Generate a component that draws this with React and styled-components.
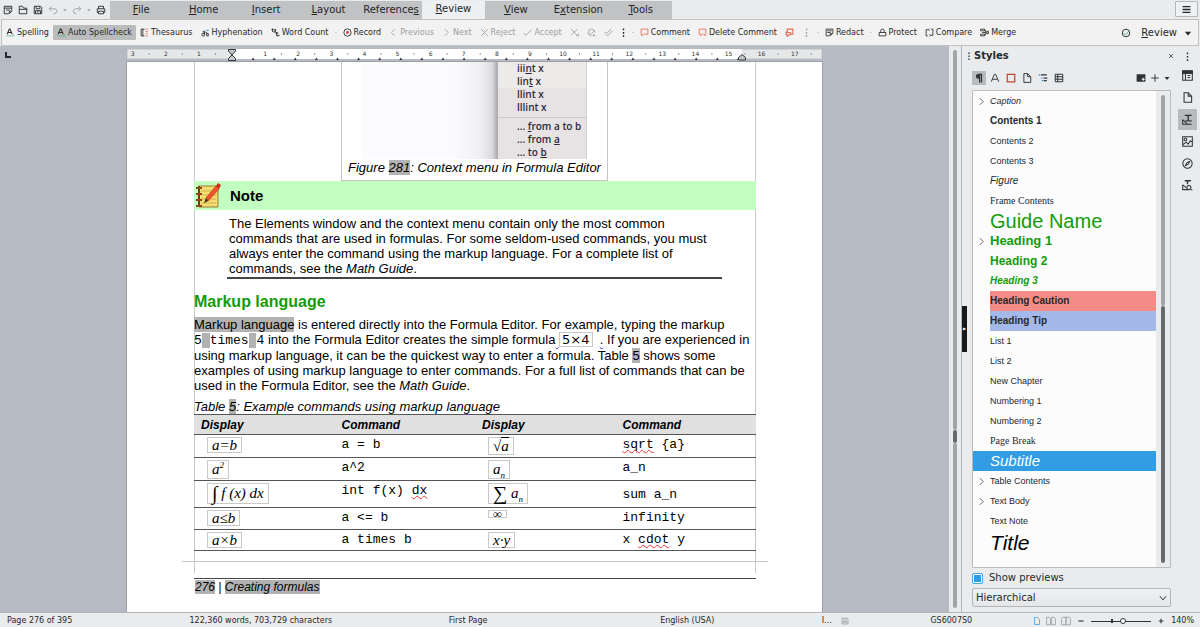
import React, { useState } from 'react';
import styled, { createGlobalStyle, css } from 'styled-components';

const ui = '"DejaVu Sans", sans-serif';
const sans = '"Liberation Sans", Arial, sans-serif';
const serif = '"Liberation Serif", "Times New Roman", serif';
const mono = '"Liberation Mono", "Courier New", monospace';

const GlobalStyle = createGlobalStyle`
  * {
    box-sizing: border-box;
  }
  body {
    margin: 0;
    background: #eaebed;
    color: #26282a;
    font: 8px/12px ${ui};
  }
  button, select, input {
    margin: 0;
    padding: 0;
    border: 0;
    background: none;
    color: inherit;
    font: inherit;
  }
`;

const Window = styled.div`
  display: flex;
  flex-direction: column;
  height: 100vh;
  overflow: hidden;
`;

/* ---------- top bar ---------- */

const TopBar = styled.header`
  display: flex;
  flex: none;
  height: 19px;
  justify-content: space-between;
`;

const QuickAccess = styled.div`
  display: flex;
  align-items: center;
  width: 110px;
  padding-left: 3px;
  gap: 5px;
`;

const IconButton = styled.button`
  display: flex;
  flex: none;
  align-items: center;
  justify-content: center;
  width: ${p => p.$w || 10}px;
  height: ${p => p.$h || 14}px;
  border-radius: 1px;
  color: ${p => p.$color || '#303336'};
  background: ${p => (p.$active ? '#b9babb' : 'none')};
`;

const DropArrow = styled(IconButton)`
  margin: 0 -1px;
`;

const MenuTabs = styled.nav`
  display: grid;
  flex: 0 1 562px;
  grid-template-columns: repeat(9, minmax(0, 1fr));
  margin: 1px auto 0 0;
  background: #c1c2c3;
`;

const MenuTab = styled.a`
  padding: ${p => (p.$active ? '2px 0 0' : '3px 0 0')};
  background: ${p => (p.$active ? '#eeeff0' : 'none')};
  color: #232527;
  font-size: 10px;
  text-align: center;
  text-decoration: none;
`;

const HamburgerButton = styled.button`
  display: flex;
  align-items: center;
  justify-content: center;
  width: 23px;
  height: 16px;
  margin: 1px 2px 0 0;
  border: 1px solid #b4b6b8;
  border-radius: 1px;
  background: #f0f1f2;
`;

/* ---------- review toolbar ---------- */

const Toolbar = styled.div`
  display: flex;
  flex: none;
  align-items: center;
  height: 27px;
  margin: 0 1px;
  border: 1px solid #c0c2c4;
  background: #f2f2f2;
`;

const ToolButton = styled.button`
  display: flex;
  flex: none;
  align-items: center;
  gap: 2px;
  height: 15px;
  padding: 0 ${p => (p.$narrow ? 2 : 4)}px;
  border-radius: 1px;
  color: ${p => (p.disabled ? '#9c9ea0' : '#26282a')};
  background: ${p => (p.$active ? '#bbbdbc' : 'none')};
  white-space: nowrap;
`;

const Sep = styled.span`
  flex: none;
  width: 2px;
  height: 1px;
  margin: 0 2px;
  background: #cfd0d1;
`;

const Spacer = styled.span`
  flex: 1;
`;

const ToolbarMenu = styled.button`
  display: flex;
  align-items: center;
  gap: 6px;
  margin: 0 5px 0 10px;
  font-size: 10px;
`;

/* ---------- workspace ---------- */

const Workspace = styled.main`
  display: flex;
  flex: 1;
  min-height: 0;
`;

const Editor = styled.section`
  display: flex;
  flex: 1;
  flex-direction: column;
  min-width: 0;
  overflow: hidden;
  background: #b6bac2;
`;

const RulerRow = styled.div`
  display: flex;
  flex: none;
  align-items: flex-start;
  justify-content: center;
  height: 16px;
  padding-top: 3px;
`;

const TabCorner = styled.span`
  flex: 1;
  height: 4px;

  &::before {
    content: '';
    display: block;
    width: 4px;
    height: 4px;
    margin: 3px 0 0 5px;
    border: solid #26282a;
    border-width: 0 0 2px 2px;
  }
`;

const Page = styled.article`
  flex: 1;
  align-self: center;
  width: 100%;
  max-width: 695px;
  padding: 0 66px 0 67px;
  background: #fff;
  box-shadow: 0 0 0 1px #9da0a6;
  color: #000;
  font: 13px/15px ${sans};
  white-space: nowrap;
`;

const TextArea = styled.div`
  box-shadow: inset 1px 0 #c9c9c9, inset -1px 0 #c9c9c9;
  padding-bottom: 11px;
`;

const Figure = styled.figure`
  width: 267px;
  height: 119px;
  margin: 0 auto 0 147px;
  padding: 0 20px;
  border: 1px solid #c4c4c4;
  border-top: 0;
`;

const FigureImage = styled.div`
  display: grid;
  grid-template-columns: 1fr 89px;
  height: 97px;
  overflow: hidden;
  background: linear-gradient(90deg, #fbfbfd 90px, #f0f0f3 118px, #dcdce0 130px, #a5a5aa 136px);
`;

const ContextMenu = styled.div`
  border-right: 1px solid #d4cfd0;
  background: linear-gradient(#edebe9 26px, #e7e2e3 26px);
  color: #2d2b3b;
  font: 600 10px/13px "Open Sans", "Noto Sans", sans-serif;

  div {
    padding-left: 19px;
  }
  hr {
    margin: 3px 0 2px;
    border: 0;
    border-top: 1px solid #cdc8c9;
  }
`;

const FigCaption = styled.figcaption`
  margin: 0 -14px;
  padding-top: 1px;
  text-align: center;
  font-style: italic;
`;

const Field = styled.span`
  background: #b2b2b2;
`;

const NoteBar = styled.div`
  display: flex;
  align-items: center;
  gap: 8px;
  height: 29px;
  background: #c2ffc0;
  font-size: 15px;
  font-weight: bold;
`;

const NoteText = styled.p`
  margin: 6px 34px 0 33px;
  padding: 0 0 1px 2px;
  border-bottom: 2px solid #444;
`;

const Heading = styled.h2`
  margin: 14px 0 6px;
  color: #149b08;
  font-size: 16px;
  line-height: 18px;
`;

const Paragraph = styled.p`
  margin: 0 0 6px;
`;

const Code = styled.code`
  font: 13px/14px ${mono};
`;

const Formula = styled.span`
  display: inline-block;
  padding: 0 4px;
  border: 1px solid #c9c9c9;
  font: italic ${p => p.$size || 15}px/${p => p.$h || 14}px ${serif};
  vertical-align: top;

  sup, sub {
    font-size: 9px;
    line-height: 0;
  }
  b {
    font-weight: normal;
    font-style: normal;
    font-size: 20px;
    line-height: 0;
    vertical-align: -2px;
  }
`;

const InlineFormula = styled(Formula)`
  padding: 0 2px;
  font: 13px/13px ${ui};
`;

const Radicand = styled.span`
  border-top: 1px solid #000;
`;

const Misspelled = styled.span`
  text-decoration: underline wavy ${p => p.$color || '#f03030'} 1px;
  text-decoration-skip-ink: none;
`;

const CommandTable = styled.table`
  width: 100%;
  border-collapse: collapse;
  table-layout: fixed;

  caption {
    font-style: italic;
    text-align: left;
  }
  th {
    height: 20px;
    padding: 0 0 0 7px;
    border: solid #555;
    border-width: 1px 0;
    background: #e0e0e0;
    font: italic bold 12px/18px ${sans};
    text-align: left;
  }
  td {
    padding: 2px 0 0 7px;
    border-bottom: 1px solid #555;
    font: 13px/15px ${mono};
    vertical-align: top;
  }
  td:nth-child(odd) {
    padding-left: 13px;
  }
`;

const Row = styled.tr`
  && td {
    height: ${p => p.$h}px;
    ${p => p.$middle && css`
      &:last-child {
        padding-top: 0;
        vertical-align: middle;
      }
    `}
  }
`;

const PageEdge = styled.div`
  height: 1px;
  margin: 10px -12px 0;
  background: #c9c9c9;
`;

const PageFooter = styled.footer`
  margin-top: 5px;
  padding: 1px;
  border-top: 1px solid #444;
  font-size: 12px;
  font-style: italic;
`;

/* ---------- scrollbars & sidebar ---------- */

const ScrollTrack = styled.div`
  display: flex;
  flex: none;
  flex-direction: column;
  width: ${p => p.$w}px;
  padding: 4px ${p => (p.$w - 4) / 2}px;
`;

const ScrollPart = styled.span`
  flex: ${p => p.$size} 0 0;
  background: ${p => (p.$thumb ? '#68696b' : '#a3a4a6')};
  border-radius: 2px;
`;

const Splitter = styled.div`
  display: flex;
  flex: none;
  align-items: center;
  width: 6px;
  border-left: 1px solid #b4b6b8;

  button {
    width: 5px;
    height: 46px;
    background: #17181a;
    color: #fff;
    font-size: 4px;
    line-height: 46px;
  }
`;

const Sidebar = styled.aside`
  display: flex;
  flex: none;
  flex-direction: column;
  width: 208px;
  padding: 0 4px 5px 5px;
`;

const SidebarTitle = styled.div`
  display: flex;
  align-items: center;
  gap: 1px;
  height: 20px;
  margin: 0 -5px 0 -7px;

  h1 {
    flex: 1;
    margin: 0;
    font-size: 10px;
  }
`;

const SidebarTools = styled.div`
  display: flex;
  align-items: center;
  gap: 2px;
  height: 24px;
`;

const TreeBox = styled.div`
  display: flex;
  flex: 1;
  min-height: 0;
  border: 1px solid #b9bbbd;
  border-radius: 1px;
`;

const Tree = styled.ul`
  flex: 1;
  margin: 0;
  padding: 0;
  overflow: hidden;
  background: #fcfcfc;
  list-style: none;
`;

const TreeItem = styled.li`
  display: flex;
  align-items: center;
  height: ${p => p.$h || 20}px;
  background: ${p => (p.$selected ? '#339de3' : 'none')};
  color: ${p => (p.$selected ? '#fff' : p.$color || '#26282a')};
`;

const Twisty = styled.span`
  display: flex;
  justify-content: center;
  width: 17px;
  color: #4a4c4f;
`;

const StyleName = styled.span`
  flex: 1;
  background: ${p => p.$bg || 'none'};
  font: ${p => p.$font};
  white-space: nowrap;
`;

const CheckLabel = styled.label`
  display: flex;
  align-items: center;
  gap: 6px;
  height: 20px;
  font-size: 10px;

  input {
    appearance: none;
    width: 11px;
    height: 11px;
    border: 1px solid #4ba6e2;
    border-radius: 2px;
    background: #fff;
  }
  input:checked {
    background: #339de3;
    box-shadow: inset 0 0 0 1px #fff;
  }
`;

const SelectBox = styled.div`
  display: grid;
  align-items: center;
  height: 19px;
  border: 1px solid #b4b6b8;
  border-radius: 2px;
  background: linear-gradient(#f0f1f2, #e5e6e8);

  select, svg {
    grid-area: 1 / 1;
  }
  select {
    appearance: none;
    width: 100%;
    padding-left: 3px;
    font-size: 10px;
  }
  svg {
    justify-self: end;
    margin-right: 2px;
    pointer-events: none;
  }
`;

const DeckTabs = styled.nav`
  display: flex;
  flex: none;
  flex-direction: column;
  align-items: center;
  width: 25px;
  padding-top: 3px;
  gap: 1px;
`;

/* ---------- status bar ---------- */

const StatusBar = styled.footer`
  display: grid;
  flex: none;
  grid-template-columns: 183fr 260fr 212fr 162fr 109fr 103fr auto;
  align-items: center;
  height: 15px;
  padding: 1px 6px 0 7px;
  border-top: 1px solid #b4b6b8;
  white-space: nowrap;
`;

const StatusGroup = styled.div`
  display: flex;
  align-items: center;
  gap: ${p => p.$gap}px;
`;

const ZoomSlider = styled.input`
  appearance: none;
  width: 60px;
  height: 7px;
  background: linear-gradient(#303336, #303336) center / 100% 1px no-repeat,
    linear-gradient(#303336, #303336) 20px center / 2px 4px no-repeat;

  &::-webkit-slider-thumb {
    appearance: none;
    width: 6px;
    height: 6px;
    border: 1px solid #303336;
    border-radius: 50%;
    background: #fff;
  }
`;

/* ---------- icons ---------- */

const Icon = ({ size = 10, w = 1.5, color = 'currentColor', children }) => (
  <svg
    width={size}
    height={size}
    viewBox="0 0 16 16"
    fill="none"
    stroke={color}
    strokeWidth={w}
    aria-hidden="true"
  >
    {children}
  </svg>
);

const icons = {
  newDoc: <path d="M9 14H2V2h12v7M2 5h12M14 10l-4 4v-4zM5 8h6" />,
  open: <path d="M2 14V2h5l2 3h5v9zM2 7h12" />,
  save: <path d="M2 2h10l2 2v10H2zM5 2v4h6V2M4 14V9h8v5M6 11h4" />,
  undo: <path d="M6 2 2 6l4 4M2 6h8q4 0 4 4t-5 4" />,
  redo: <path d="M10 2l4 4-4 4M14 6H6q-4 0-4 4t5 4" />,
  print: <path d="M4 6V2h8v4M4 12H2V6h12v6h-2M4 10h8v4H4z" />,
  spelling: (
    <>
      <path d="M2 11 6 2h1l4 9M4 8h6" strokeWidth="1.8" />
      <path d="M1 14h14M13 11v1" stroke="#2fa866" strokeDasharray="2 1" />
    </>
  ),
  thesaurus: (
    <>
      <path d="M8 2H2v12h6M5 2v12" />
      <path d="M10 2h4M10 6h4M10 10h4M10 14h4" stroke="#e0715a" />
    </>
  ),
  hyphenation: (
    <>
      <circle cx="4" cy="12" r="2.5" />
      <path d="M6 12V7M3 6h4v3H3M10 7v7M10 10h3v4h-3" />
      <path d="M9 4h5" stroke="#3a8edb" />
    </>
  ),
  wordCount: <path d="M1 3l2-1v5M5 3h3v2L6 7h2M8 9h5M10 7v6q0 1 3 1M14 12v2" strokeWidth="1.8" />,
  record: (
    <>
      <circle cx="8" cy="8" r="6.5" />
      <circle cx="8" cy="8" r="2.5" fill="#d93a3a" stroke="none" />
    </>
  ),
  prev: <path d="M10 2 4 8l6 6" />,
  next: <path d="m5 2 6 6-6 6" />,
  reject: <path d="m2 2 12 12M14 2 2 14" />,
  accept: <path d="m1 9 4 4L15 3" />,
  rejectNext: <path d="m2 2 11 11M13 2 2 13M11 14h4v-4" />,
  acceptTrack: <path d="M14 8a6 6 0 1 0-6 6M4 8l3 3 6-6M12 11v4M10 13h5" />,
  acceptAll: <path d="m1 7 3 3 9-8M3 11l3 3 9-9" />,
  comment: <path d="M2 2h12v9H6l-3 3v-3H2z" stroke="#ea6a52" />,
  deleteComment: <path d="M2 11V2h12v8M2 11h2v3l3-3h2M10 10l4 4M14 10l-4 4" stroke="#ea6a52" />,
  comments: <path d="M4 9V2h10v9H9M2 6v6h2v3l3-3h3V8H2z" stroke="#ea6a52" strokeWidth="2" />,
  redact: <path d="M8 14H2V2h12v7M4 5h8M4 8h6M14 9l-5 5v-4h5" />,
  protect: <path d="M2 8h12v6H2zM5 8V4q0-2 3-2t3 2v4" />,
  compare: <path d="M6 3H2v11h3M10 13h4V2h-3M8 1 6 3l2 2M8 11l2 2-2 2" />,
  merge: <path d="M1 2h7v3H1zM1 11h7v3H1zM8 4h2v4H4M8 12h2V8M12 6h3v4h-3z" />,
  check: (
    <>
      <circle cx="8" cy="8" r="6" />
      <path d="m4 8 3 3 6-6" stroke="#3daf77" />
    </>
  ),
  down: <path d="M3 6h10l-5 6z" fill="currentColor" stroke="none" />,
  dots: <path d="M8 1v3M8 7v3M8 13v3" strokeWidth="2.5" />,
  hamburger: <path d="M1 3h14M1 8h14M1 13h14" strokeWidth="2.4" />,
  para: <path d="M8 1h5v14h-2V3h-1v12H8V9Q3 9 3 5t5-4z" fill="currentColor" stroke="none" />,
  frame: <path d="M2 2h12v12H2z" stroke="#c0492d" strokeWidth="2" />,
  page: <path d="M3 1h6l5 5v9H3zM9 1v5h5" />,
  list: (
    <>
      <path d="M5 3h9M9 8h6M9 12h5" strokeWidth="2" />
      <path d="M1 3h3M5 8h2M6 12h2" stroke="#3a8edb" strokeWidth="2" />
    </>
  ),
  table: <path d="M2 2h12v12H2zM2 6h12M2 10h12M6 2v12" strokeWidth="1.6" />,
  fill: (
    <>
      <path d="M1 2h14v12H1z" fill="currentColor" stroke="none" />
      <path d="M9 10h5M11.500 7.500v5" stroke="#fff" />
    </>
  ),
  plus: <path d="M8 2v12M2 8h12" />,
  close: <path d="m4 4 8 8M12 4l-8 8" />,
  properties: (
    <>
      <path d="M1 2h14v13H1zM5 5v10M8 8h4M8 11h4" />
      <path d="M1 1h14v4H1z" fill="currentColor" />
    </>
  ),
  styles: (
    <>
      <path d="M4 2h10M9 2v7" strokeWidth="2" />
      <path d="M1 8v7h13M1 8l7 7M5 10h9" />
    </>
  ),
  gallery: (
    <>
      <path d="M1 1h14v14H1zM1 13l5-4 3 3 3-5 3 2" />
      <circle cx="5" cy="5" r="2" />
    </>
  ),
  navigator: (
    <>
      <circle cx="8" cy="8" r="6.800" />
      <path d="m11 5-2 4-4 2 2-4z" />
    </>
  ),
  inspector: (
    <>
      <path d="M4 1h9M8 1v5" strokeWidth="2" />
      <path d="M1 7v7h8M1 7l5 4M13 14l2 1" />
      <circle cx="10" cy="11" r="3" />
    </>
  ),
  chevronDown: <path d="m3 5 5 6 5-6" />,
};

const Glyph = ({ name, ...rest }) => <Icon {...rest}>{icons[name]}</Icon>;

const NotebookIcon = () => (
  <svg width="28" height="28" viewBox="0 0 28 28" aria-hidden="true">
    <path d="M5 4h19v21H5z" fill="#f3dc72" stroke="#9a7a35" />
    <path d="M7 9h15M7 13h15M7 17h15M7 21h15" stroke="#d1b04e" />
    <path d="M5 4v21" stroke="#6b3d17" strokeWidth="2" />
    <path d="M2 6h6M2 12h6M2 18h6M2 24h6" stroke="#8b4a1a" strokeWidth="2" />
    <path d="M12 16 22 4l3 3-11 12z" fill="#f0542c" stroke="#b53314" strokeWidth="0.700" />
    <path d="m22 4 2-3 3 2-2 4z" fill="#d22b14" />
    <path d="m12 16-2 5 4-2z" fill="#3a2a1c" />
  </svg>
);

const RULER_CM = 33.1;
const RULER_ZERO = 105;

const Ruler = () => {
  const labels = [];
  for (let i = -3; i <= 17; i += 1) if (i !== 0) labels.push(i);
  const stops = Array.from({ length: 24 }, (_, i) => RULER_ZERO + (i + 1) * 21.1);

  return (
    <svg width="695" height="13" viewBox="0 0 695 13" role="img" aria-label="Ruler">
      <path d="M.5 .5h694v9H.5z" fill="#e6e7e9" stroke="#d2d4d6" />
      <path d="M105 0h510v10H105z" fill="#fff" />
      {labels.map(n => (
        <text
          key={n}
          x={RULER_ZERO + n * RULER_CM}
          y="7"
          fontSize="6"
          textAnchor="middle"
          fill="#333"
        >
          {Math.abs(n)}
        </text>
      ))}
      {labels.map(n => (
        <path key={n} d={`M${RULER_ZERO + n * RULER_CM + 16.5} 4v2`} stroke="#999" />
      ))}
      {stops.map(x => (
        <path key={x} d={`M${x - 1.5} 11l1.500-2.500 1.500 2.500z`} fill="#333" />
      ))}
      <path
        d="M101.500 .5h7v1.500l-3.500 4-3.500-4zM101.500 11.500h7v-2l-3.500-3.500-3.500 3.500z"
        fill="#c4c7cb"
        stroke="#33363a"
      />
      <path d="M611.500 11h7v-2.500l-3.500-3-3.500 3z" fill="#c4c7cb" stroke="#33363a" />
    </svg>
  );
};

/* ---------- data ---------- */

const quick = [
  { icon: 'newDoc' },
  { icon: 'open' },
  { icon: 'save' },
  { icon: 'undo', color: '#a2a4a6' },
  { icon: 'down', color: '#a2a4a6' },
  { icon: 'redo', color: '#a2a4a6' },
  { icon: 'down', color: '#a2a4a6' },
  { icon: 'print' },
];

// [text before the accelerator, accelerator, text after it]
const menus = [
  ['', 'F', 'ile'],
  ['', 'H', 'ome'],
  ['', 'I', 'nsert'],
  ['', 'L', 'ayout'],
  ['Reference', 's', ''],
  ['', 'R', 'eview'],
  ['', 'V', 'iew'],
  ['E', 'x', 'tension'],
  ['', 'T', 'ools'],
];

const tools = [
  { icon: 'spelling', label: 'Spelling' },
  { icon: 'spelling', label: 'Auto Spellcheck', active: true },
  { icon: 'thesaurus', label: 'Thesaurus' },
  { icon: 'hyphenation', label: 'Hyphenation' },
  { icon: 'wordCount', label: 'Word Count' },
  { sep: true },
  { icon: 'record', label: 'Record' },
  { icon: 'prev', label: 'Previous', disabled: true },
  { icon: 'next', label: 'Next', disabled: true },
  { icon: 'reject', label: 'Reject', disabled: true },
  { icon: 'accept', label: 'Accept', disabled: true },
  { icon: 'rejectNext', disabled: true },
  { icon: 'acceptTrack', disabled: true },
  { icon: 'acceptAll', disabled: true },
  { icon: 'dots', narrow: true },
  { sep: true },
  { icon: 'comment', label: 'Comment' },
  { icon: 'deleteComment', label: 'Delete Comment' },
  { icon: 'comments' },
  { icon: 'dots', disabled: true },
  { sep: true },
  { icon: 'redact', label: 'Redact' },
  { sep: true },
  { icon: 'protect', label: 'Protect' },
  { icon: 'compare', label: 'Compare' },
  { icon: 'merge', label: 'Merge' },
];

const plain = `9px/20px ${sans}`;
const green = '#149b08';

const styleList = [
  { name: 'Caption', font: `italic ${plain}`, open: true },
  { name: 'Contents 1', font: `bold 10px/20px ${sans}` },
  { name: 'Contents 2', font: plain },
  { name: 'Contents 3', font: plain },
  { name: 'Figure', font: `italic 10px/20px ${sans}` },
  { name: 'Frame Contents', font: `10px/20px ${serif}` },
  { name: 'Guide Name', font: `20px/24px ${sans}`, color: green },
  { name: 'Heading 1', font: `bold 13px/20px ${sans}`, color: green, open: true },
  { name: 'Heading 2', font: `bold 12px/20px ${sans}`, color: green },
  { name: 'Heading 3', font: `italic bold 10px/20px ${sans}`, color: green },
  { name: 'Heading Caution', font: `bold 10px/20px ${sans}`, bg: '#f38c87' },
  { name: 'Heading Tip', font: `bold 10px/20px ${sans}`, bg: '#a4b9ea' },
  { name: 'List 1', font: plain },
  { name: 'List 2', font: plain },
  { name: 'New Chapter', font: plain },
  { name: 'Numbering 1', font: plain },
  { name: 'Numbering 2', font: plain },
  { name: 'Page Break', font: `10px/20px ${serif}` },
  { name: 'Subtitle', font: `italic 15px/20px ${sans}` },
  { name: 'Table Contents', font: plain, open: true },
  { name: 'Text Body', font: plain, open: true },
  { name: 'Text Note', font: plain },
  { name: 'Title', font: `italic 21px/24px ${sans}`, color: '#000', h: 24 },
];

const categories = ['para', 'A', 'frame', 'page', 'list', 'table'];
const decks = ['properties', 'page', 'styles', 'gallery', 'navigator', 'inspector'];

/* ---------- parts ---------- */

const Document = () => (
  <Page>
    <TextArea>
      <Figure>
        <FigureImage>
          <span />
          <ContextMenu>
            <div>iii<u>n</u>t x</div>
            <div>lin<u>t</u> x</div>
            <div>llint x</div>
            <div>lllint x</div>
            <hr />
            <div>... <u>f</u>rom a to b</div>
            <div>... from <u>a</u></div>
            <div>... to <u>b</u></div>
          </ContextMenu>
        </FigureImage>
        <FigCaption>
          Figure <Field>281</Field>: Context menu in Formula Editor
        </FigCaption>
      </Figure>
      <NoteBar>
        <NotebookIcon />
        Note
      </NoteBar>
      <NoteText>
        The Elements window and the context menu contain only the most common
        <br />
        commands that are used in formulas. For some seldom-used commands, you must
        <br />
        always enter the command using the markup language. For a complete list of
        <br />
        commands, see the <i>Math Guide</i>.
      </NoteText>
      <Heading>Markup language</Heading>
      <Paragraph>
        <Field>Markup language</Field> is entered directly into the Formula Editor. For example,
        typing the markup
        <br />
        <Code>
          5<Field>&nbsp;</Field>times<Field>&nbsp;</Field>4
        </Code>{' '}
        into the Formula Editor creates the simple formula
        <Misspelled $color="#3a3af0"> </Misspelled>{' '}
        <InlineFormula>5×4</InlineFormula>&nbsp; <Misspelled $color="#3a3af0">.</Misspelled>{' '}
        If you are experienced in
        <br />
        using markup language, it can be the quickest way to enter a formula. Table{' '}
        <Field>5</Field> shows some
        <br />
        examples of using markup language to enter commands. For a full list of commands that can
        be
        <br />
        used in the Formula Editor, see the <i>Math Guide</i>.
      </Paragraph>
      <CommandTable>
        <caption>
          Table <Field>5</Field>: Example commands using markup language
        </caption>
        <thead>
          <tr>
            <th>Display</th>
            <th>Command</th>
            <th>Display</th>
            <th>Command</th>
          </tr>
        </thead>
        <tbody>
          <Row $h={23}>
            <td><Formula>a=b</Formula></td>
            <td>a = b</td>
            <td><Formula $h={16}>√<Radicand>a</Radicand></Formula></td>
            <td><Misspelled>sqrt</Misspelled> {'{a}'}</td>
          </Row>
          <Row $h={23}>
            <td><Formula $h={17}>a<sup>2</sup></Formula></td>
            <td>a^2</td>
            <td><Formula $h={17}>a<sub>n</sub></Formula></td>
            <td>a_n</td>
          </Row>
          <Row $h={27} $middle>
            <td><Formula $h={19}><b>∫</b> f (x) dx</Formula></td>
            <td>int f(x) <Misspelled>dx</Misspelled></td>
            <td><Formula $h={19}><b>∑</b> a<sub>n</sub></Formula></td>
            <td>sum a_n</td>
          </Row>
          <Row $h={22}>
            <td><Formula>a≤b</Formula></td>
            <td>a &lt;= b</td>
            <td><Formula $h={6} $size={12}>∞</Formula></td>
            <td>infinity</td>
          </Row>
          <Row $h={21}>
            <td><Formula>a×b</Formula></td>
            <td>a times b</td>
            <td><Formula>x·y</Formula></td>
            <td>x <Misspelled>cdot</Misspelled> y</td>
          </Row>
        </tbody>
      </CommandTable>
      <PageEdge />
    </TextArea>
    <PageFooter>
      <Field>276</Field> | <Field>Creating formulas</Field>
    </PageFooter>
  </Page>
);

const StylesSidebar = () => {
  const [previews, setPreviews] = useState(true);
  const [selected, setSelected] = useState('Subtitle');

  return (
    <Sidebar>
      <SidebarTitle>
        <Glyph name="dots" size={8} />
        <h1>Styles</h1>
        <IconButton aria-label="Close"><Glyph name="close" size={8} /></IconButton>
      </SidebarTitle>
      <SidebarTools>
        {categories.map(c => (
          <IconButton key={c} $w={14} $active={c === 'para'} aria-label={c}>
            {c === 'A' ? <Icon><path d="M2 14 7 2h2l5 12M4 10h8" /></Icon> : <Glyph name={c} />}
          </IconButton>
        ))}
        <Spacer />
        <IconButton $w={12} aria-label="Fill format"><Glyph name="fill" /></IconButton>
        <IconButton $w={12} aria-label="New style"><Glyph name="plus" /></IconButton>
        <IconButton $w={8} aria-label="Style actions"><Glyph name="down" size={8} /></IconButton>
      </SidebarTools>
      <TreeBox>
        <Tree>
          {styleList.map(s => (
            <TreeItem
              key={s.name}
              $h={s.h}
              $color={s.color}
              $selected={selected === s.name}
              onClick={() => setSelected(s.name)}
            >
              <Twisty>{s.open && <Glyph name="next" size={9} />}</Twisty>
              <StyleName $font={s.font} $bg={s.bg}>{s.name}</StyleName>
            </TreeItem>
          ))}
        </Tree>
        <ScrollTrack $w={14}>
          <ScrollPart $size={211} />
          <ScrollPart $size={257} $thumb />
        </ScrollTrack>
      </TreeBox>
      <CheckLabel>
        <input type="checkbox" checked={previews} onChange={e => setPreviews(e.target.checked)} />
        Show previews
      </CheckLabel>
      <SelectBox>
        <select aria-label="Style filter">
          <option>Hierarchical</option>
        </select>
        <Glyph name="chevronDown" />
      </SelectBox>
    </Sidebar>
  );
};

const App = () => {
  const [zoom, setZoom] = useState(53);

  return (
    <Window>
      <GlobalStyle />
      <TopBar>
        <QuickAccess>
          {quick.map((q, i) =>
            q.icon === 'down' ? (
              <DropArrow key={i} $color={q.color} $w={6} aria-label="More">
                <Glyph name="down" size={8} />
              </DropArrow>
            ) : (
              <IconButton key={i} $color={q.color} aria-label={q.icon}>
                <Glyph name={q.icon} />
              </IconButton>
            )
          )}
        </QuickAccess>
        <MenuTabs>
          {menus.map(([before, key, after]) => (
            <MenuTab key={before + key} href="#" $active={key === 'R'}>
              {before}<u>{key}</u>{after}
            </MenuTab>
          ))}
        </MenuTabs>
        <HamburgerButton aria-label="Menu"><Glyph name="hamburger" size={9} /></HamburgerButton>
      </TopBar>

      <Toolbar>
        {tools.map((t, i) =>
          t.sep ? (
            <Sep key={i} />
          ) : (
            <ToolButton
              key={i}
              $active={t.active}
              $narrow={t.narrow}
              disabled={t.disabled}
              aria-label={t.label || t.icon}
            >
              <Glyph name={t.icon} size={9} />
              {t.label}
            </ToolButton>
          )
        )}
        <Spacer />
        <Glyph name="check" />
        <ToolbarMenu>
          <span><u>R</u>eview</span>
          <Glyph name="down" />
        </ToolbarMenu>
      </Toolbar>

      <Workspace>
        <Editor>
          <RulerRow>
            <TabCorner />
            <Ruler />
            <Spacer />
          </RulerRow>
          <Document />
        </Editor>
        <ScrollTrack $w={12}>
          <ScrollPart $size={381} />
          <ScrollPart $size={13} $thumb />
          <ScrollPart $size={165} />
        </ScrollTrack>
        <Splitter><button aria-label="Hide sidebar">▶</button></Splitter>
        <StylesSidebar />
        <DeckTabs>
          <IconButton $w={18} $h={15} aria-label="Sidebar settings"><Glyph name="dots" size={9} /></IconButton>
          {decks.map(d => (
            <IconButton key={d} $w={19} $h={21} $active={d === 'styles'} aria-label={d}>
              <Glyph name={d} size={11} />
            </IconButton>
          ))}
        </DeckTabs>
      </Workspace>

      <StatusBar>
        <span>Page 276 of 395</span>
        <span>122,360 words, 703,729 characters</span>
        <span>First Page</span>
        <span>English (USA)</span>
        <StatusGroup $gap={9}>
          <span>I...</span>
          <Glyph name="save" size={8} color="#a2a4a6" />
        </StatusGroup>
        <span>GS6007S0</span>
        <StatusGroup $gap={5}>
          <Icon size={8} color="#339de3"><path d="M3 1h6l4 4v10H3z" /></Icon>
          <Icon size={10} color="#a2a4a6"><path d="M1 2h4l2 2v10H1zM9 2h4l2 2v10H9z" /></Icon>
          <Icon size={10} color="#a2a4a6"><path d="M1 14V4l2-2h5v12zM8 2h5l2 2v10H8z" /></Icon>
          <IconButton aria-label="Zoom out"><Icon size={6}><path d="M1 8h14" strokeWidth="3" /></Icon></IconButton>
          <ZoomSlider
            type="range"
            aria-label="Zoom"
            value={zoom}
            onChange={e => setZoom(e.target.value)}
          />
          <IconButton aria-label="Zoom in"><Glyph name="plus" size={6} w={3} /></IconButton>
          <span>140%</span>
        </StatusGroup>
      </StatusBar>
    </Window>
  );
};

export default App;
